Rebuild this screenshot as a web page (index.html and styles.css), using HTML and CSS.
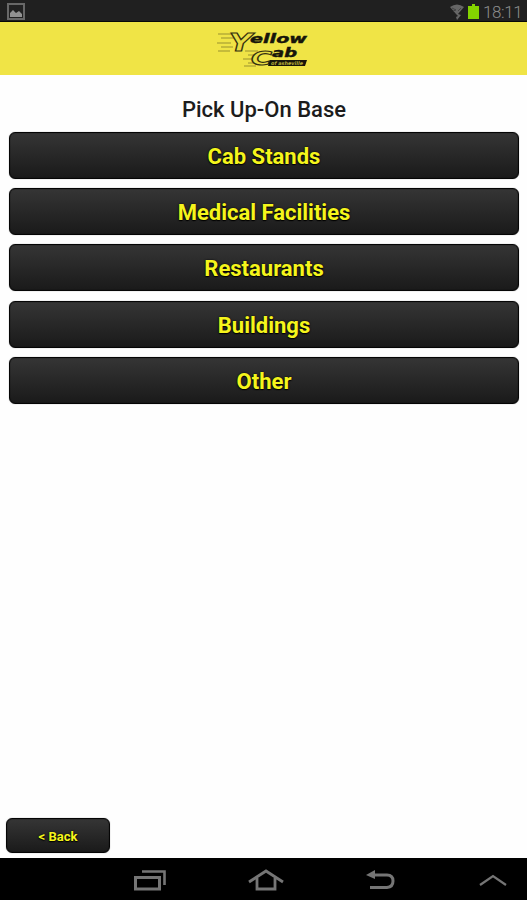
FILE: index.html
```html
<!DOCTYPE html>
<html lang="en">
<head>
  <meta charset="UTF-8" />
  <meta name="viewport" content="width=device-width, initial-scale=1.0" />
  <title>Yellow Cab</title>
  <link rel="stylesheet" href="styles.css">
</head>
<body>

  <!-- Status bar -->
  <div class="status-bar">
    <svg class="status-picture" width="18" height="17" viewBox="0 0 18 17">
      <rect x="1" y="1" width="16" height="15" fill="#222" stroke="#686868" stroke-width="2" />
      <path d="M3 14V10L6 7L9 10L12 8L15 11V14Z" fill="#929292" />
    </svg>
    <div class="status-right">
      <svg width="15" height="17" viewBox="0 0 15 17">
        <path d="M0 4Q7 -1 14 4L8 11L11 12L7 17L6 14L8 13L6 11Z" fill="#666" />
        <path d="M2 5L6 7L3 8M11 5L8 8" fill="none" stroke="#444" />
      </svg>
      <svg class="battery" width="11" height="15" viewBox="0 0 11 15">
        <path d="M0 2H4V0H7V2H11V15H0Z" fill="#84d300" />
      </svg>
      <span class="clock">18:11</span>
    </div>
  </div>

  <header class="app-header">
    <svg class="logo" width="96" height="46" viewBox="0 0 96 46">
      <g class="logo-speed">
        <path d="M2 6H16M5 10H18M1 15H15M5 19H17M2 23H14" />
        <path d="M29 23H42M32 27H39M27 31H37M32 35H38M28 38H40" />
      </g>
      <text class="logo-initial" x="13" y="23" font-size="24" textLength="23" lengthAdjust="spacingAndGlyphs">Y</text>
      <text class="logo-initial" x="35" y="37" font-size="20" textLength="21" lengthAdjust="spacingAndGlyphs">C</text>
      <text class="logo-word" x="34" y="15" textLength="57" lengthAdjust="spacingAndGlyphs">ellow</text>
      <text class="logo-word" x="56" y="29" textLength="25" lengthAdjust="spacingAndGlyphs">ab</text>
      <path d="M54 32H91L89 38H52Z" fill="#17150a" />
      <text class="logo-city" x="55" y="37" textLength="32" lengthAdjust="spacingAndGlyphs">of asheville</text>
    </svg>
  </header>

  <main class="content">
    <h1 class="title">Pick Up-On Base</h1>
    <div class="menu">
      <button class="btn">Cab Stands</button>
      <button class="btn">Medical Facilities</button>
      <button class="btn">Restaurants</button>
      <button class="btn">Buildings</button>
      <button class="btn">Other</button>
    </div>
    <button class="btn btn-back">&lt; Back</button>
  </main>

  <!-- System navigation -->
  <nav class="nav-bar">
    <svg width="32" height="22" viewBox="0 0 32 22">
      <path d="M1.500 8.500H25.500V20H1.500Z" stroke-width="3" />
      <path d="M8 2.500H30.500V16" stroke-width="2.600" />
    </svg>
    <svg width="36" height="22" viewBox="0 0 36 22">
      <path d="M1 13L18 2L35 13M9 9V20H27V9" stroke-width="2.800" />
    </svg>
    <svg width="29" height="21" viewBox="0 0 29 21">
      <path d="M8 6H21Q27 6 27 12T21 18.500H4" stroke-width="3" />
      <path d="M0 6L9 1V10Z" class="arrow-head" />
    </svg>
    <svg width="28" height="22" viewBox="0 0 28 22">
      <path d="M1 16L14 7L27 16" stroke-width="2.200" />
    </svg>
  </nav>

</body>
</html>
```
FILE: styles.css
```css
* { box-sizing: border-box; margin: 0; padding: 0; }

body {
  display: flex;
  flex-direction: column;
  height: 100vh;
  background-color: #fefefe;
  font-family: Roboto, sans-serif;
  overflow: hidden;
}

.status-bar {
  display: flex;
  justify-content: space-between;
  height: 22px;
  padding: 3px 5px 0 7px;
  background-color: #202020;
  border-bottom: 1px solid #080808;
}

.status-right {
  display: flex;
  align-items: flex-start;
  gap: 3px;
}

.battery {
  margin-top: 1px;
}

.clock {
  margin-left: 1px;
  width: 39px;
  color: #8c8c8c;
  font-size: 17px;
  font-weight: 300;
  line-height: 18px;
  letter-spacing: -0.4px;
}

.app-header {
  display: flex;
  justify-content: center;
  height: 53px;
  padding-top: 6px;
  background-color: #f0e446;
}

.logo {
  font-family: "DejaVu Sans", sans-serif;
  font-style: italic;
  font-weight: bold;
}

.logo-speed {
  fill: none;
  stroke: #9a922e;
  stroke-width: 1;
}

.logo-initial {
  fill: #e8dc43;
  stroke: #35300f;
  stroke-width: 1.1;
}

.logo-word {
  fill: #17150a;
  stroke: #17150a;
  stroke-width: 0.4;
  font-size: 12px;
}

.logo-city {
  fill: #b8ae38;
  font-size: 5px;
}

.content {
  flex: 1;
  display: flex;
  flex-direction: column;
  padding: 20px 8px 5px 9px;
}

.title {
  color: #1c1c1c;
  font-size: 22px;
  font-weight: 500;
  line-height: 29px;
  text-align: center;
}

.menu {
  display: flex;
  flex-direction: column;
  gap: 9.2px;
  margin-top: 8px;
}

.btn {
  height: 47px;
  padding-top: 2px;
  border: 1px solid #050505;
  border-radius: 6px;
  background: linear-gradient(#353535, #1a1a1a);
  box-shadow: 0 0 1px 0 rgba(0,0,0,0.5), inset 0 0 1px #000;
  color: #f5f51c;
  font-family: inherit;
  font-size: 22px;
  font-weight: bold;
  text-shadow: 0 0 2px #000, 0 1px 1px #000;
  cursor: pointer;
}

.btn-back {
  width: 104px;
  height: 35px;
  margin: auto 0 0 -3px;
  font-size: 13px;
}

.nav-bar {
  display: flex;
  height: 42px;
  padding: 11px 20px 0 134px;
  gap: 82px;
  background-color: #000;
}

.nav-bar svg {
  flex: none;
  fill: none;
  stroke: #757575;
}

.nav-bar svg:last-child {
  margin-left: auto;
}

.nav-bar .arrow-head {
  fill: #757575;
  stroke: none;
}
```
